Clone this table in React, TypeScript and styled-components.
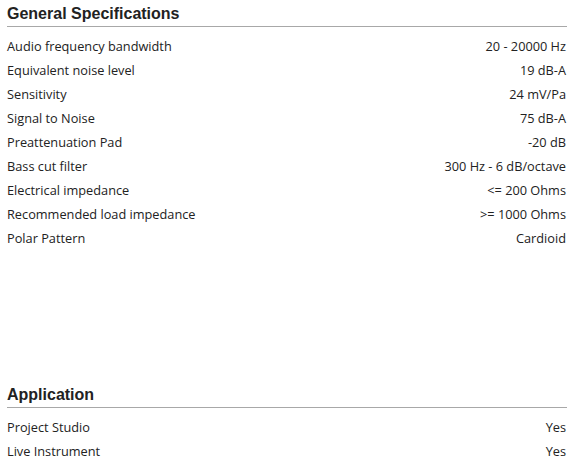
import React from "react";
import styled, { createGlobalStyle } from "styled-components";

const Global = createGlobalStyle`
  html, body { margin: 0; padding: 0; background: #ffffff; }
  body { font-family: "Open Sans", "Noto Sans", sans-serif; }
`;

const Page = styled.div`
  width: 560px;
  padding: 0 16px 0 7px;
  display: flex;
  flex-direction: column;
`;

const Section = styled.section<{ $gap?: number }>`
  display: flex;
  flex-direction: column;
  margin-top: ${(p) => p.$gap ?? 0}px;
`;

const Heading = styled.h2`
  margin: 0;
  padding: 5px 0 3px;
  font-family: "Liberation Sans", Arial, sans-serif;
  font-weight: bold;
  font-size: 16px;
  line-height: 18px;
  color: #222222;
  border-bottom: 1px solid #a8a8a8;
`;

const List = styled.div`
  display: flex;
  flex-direction: column;
  padding-top: 7px;
`;

const Row = styled.div`
  display: flex;
  justify-content: space-between;
  align-items: center;
  height: 24px;
  padding-right: 1px;
  font-size: 12.75px;
  color: #222222;
`;

const Label = styled.span``;
const Value = styled.span`
  text-align: right;
`;

const general: [string, string][] = [
  ["Audio frequency bandwidth", "20 - 20000 Hz"],
  ["Equivalent noise level", "19 dB-A"],
  ["Sensitivity", "24 mV/Pa"],
  ["Signal to Noise", "75 dB-A"],
  ["Preattenuation Pad", "-20 dB"],
  ["Bass cut filter", "300 Hz - 6 dB/octave"],
  ["Electrical impedance", "<= 200 Ohms"],
  ["Recommended load impedance", ">= 1000 Ohms"],
  ["Polar Pattern", "Cardioid"],
];

const application: [string, string][] = [
  ["Project Studio", "Yes"],
  ["Live Instrument", "Yes"],
];

export default function App() {
  return (
    <>
      <Global />
      <Page>
        <Section>
          <Heading>General Specifications</Heading>
          <List>
            {general.map(([k, v]) => (
              <Row key={k}>
                <Label>{k}</Label>
                <Value>{v}</Value>
              </Row>
            ))}
          </List>
        </Section>
        <Section $gap={131}>
          <Heading>Application</Heading>
          <List>
            {application.map(([k, v]) => (
              <Row key={k}>
                <Label>{k}</Label>
                <Value>{v}</Value>
              </Row>
            ))}
          </List>
        </Section>
      </Page>
    </>
  );
}
